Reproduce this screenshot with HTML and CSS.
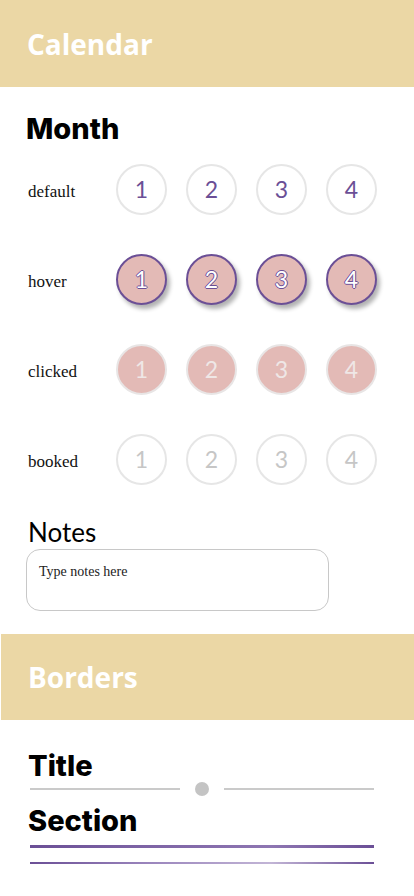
FILE: index.html
```html
<!DOCTYPE html>
<html lang="en">
<head>
<meta charset="utf-8">
<title>Calendar</title>
<link rel="stylesheet" href="styles.css">
</head>
<body>
<header class="banner"><h1 class="banner-title">Calendar</h1></header>

<section class="calendar">
  <h2 class="heading">Month</h2>
  <div class="states">
    <div class="state-row">
      <span class="state-label">default</span>
      <div class="days">
        <span class="day day-default">1</span>
        <span class="day day-default">2</span>
        <span class="day day-default">3</span>
        <span class="day day-default">4</span>
      </div>
    </div>
    <div class="state-row">
      <span class="state-label">hover</span>
      <div class="days">
        <span class="day day-hover">1</span>
        <span class="day day-hover">2</span>
        <span class="day day-hover">3</span>
        <span class="day day-hover">4</span>
      </div>
    </div>
    <div class="state-row">
      <span class="state-label">clicked</span>
      <div class="days">
        <span class="day day-clicked">1</span>
        <span class="day day-clicked">2</span>
        <span class="day day-clicked">3</span>
        <span class="day day-clicked">4</span>
      </div>
    </div>
    <div class="state-row">
      <span class="state-label">booked</span>
      <div class="days">
        <span class="day day-booked">1</span>
        <span class="day day-booked">2</span>
        <span class="day day-booked">3</span>
        <span class="day day-booked">4</span>
      </div>
    </div>
  </div>

  <h3 class="notes-title">Notes</h3>
  <textarea class="notes" placeholder="Type notes here"></textarea>
</section>

<header class="banner banner-second"><h1 class="banner-title">Borders</h1></header>

<section class="borders">
  <h2 class="heading">Title</h2>
  <div class="title-divider">
    <span class="rule"></span>
    <span class="dot"></span>
    <span class="rule"></span>
  </div>
  <h2 class="heading section-heading">Section</h2>
  <div class="section-rule-thick"></div>
  <div class="section-rule-thin"></div>
</section>
</body>
</html>
```

FILE: styles.css
```css
* { box-sizing: border-box; }

body {
  margin: 0;
  background: #fff;
  font-family: "Liberation Serif", serif;
  color: #000;
}

.banner {
  height: 87px;
  background: #ebd7a5;
  display: flex;
  align-items: center;
  padding-left: 27px;
}

.banner-second {
  height: 86px;
  margin-left: 1px;
}

.banner-title {
  margin: 0;
  font-family: "Open Sans", sans-serif;
  font-weight: 700;
  font-size: 28px;
  color: #fff;
  line-height: 1;
}

.calendar {
  padding: 26px 0 23px 26px;
}

.heading {
  margin: 0;
  font-family: Inter, "Noto Sans", sans-serif;
  font-weight: 800;
  font-size: 29px;
  line-height: 32px;
  letter-spacing: 0;
}

.states {
  margin-top: 19px;
  display: flex;
  flex-direction: column;
  gap: 40px;
}

.state-row {
  display: flex;
  align-items: center;
  height: 50px;
}

.state-label {
  width: 90px;
  padding-left: 2px;
  padding-top: 5px;
  font-family: "Liberation Serif", serif;
  font-size: 17px;
  color: #111;
}

.days {
  display: flex;
  gap: 19px;
}

.day {
  width: 51px;
  height: 51px;
  border-radius: 50%;
  display: flex;
  align-items: center;
  justify-content: center;
  font-family: Lato, Inter, sans-serif;
  font-size: 23px;
  line-height: 1;
}

.day-default {
  border: 2px solid #e6e6e6;
  color: #6b4f96;
}

.day-hover {
  background: #e3bab6;
  border: 2px solid #6b4f96;
  color: #fff;
  box-shadow: 3px 4px 4px rgba(0, 0, 0, 0.3);
  text-shadow: 1px 0 0 #6b4f96, -1px 0 0 #6b4f96, 0 1px 0 #6b4f96, 0 -1px 0 #6b4f96;
}

.day-clicked {
  background: #e3bab6;
  border: 2px solid #e8e5e5;
  color: #efe7e6;
}

.day-booked {
  border: 2px solid #e6e6e6;
  color: #c6c6c6;
}

.notes-title {
  margin: 33px 0 0 2px;
  font-family: Lato, Inter, sans-serif;
  font-weight: 400;
  font-size: 26px;
  line-height: 30px;
}

.notes {
  display: block;
  margin-top: 2px;
  width: 303px;
  height: 62px;
  border: 1px solid #c8c8c8;
  border-radius: 14px;
  padding: 14px 12px;
  font-family: "Liberation Serif", serif;
  font-size: 14px;
  resize: none;
  outline: none;
}

.notes::placeholder {
  color: #222;
}

.borders {
  padding: 30px 40px 0 28px;
}

.title-divider {
  display: flex;
  align-items: center;
  gap: 14px;
  margin: 0 0 0 2px;
  width: 344px;
}

.rule {
  flex: 1;
  height: 2px;
  background: #cacaca;
}

.dot {
  width: 14px;
  height: 14px;
  border-radius: 50%;
  background: #c4c4c4;
  margin: 0 1px;
}

.section-heading {
  margin-top: 9px;
}

.section-rule-thick {
  margin: 8px 0 0 2px;
  width: 344px;
  height: 3px;
  background: linear-gradient(90deg, #6b4f96 0%, #7c62a4 30%, #8e76b2 70%, #6b4f96 100%);
}

.section-rule-thin {
  margin: 14px 0 0 2px;
  width: 344px;
  height: 2px;
  background: linear-gradient(90deg, #6b4f96 0%, #9b86bd 35%, #c2b5d6 70%, #6b4f96 100%);
}
```
